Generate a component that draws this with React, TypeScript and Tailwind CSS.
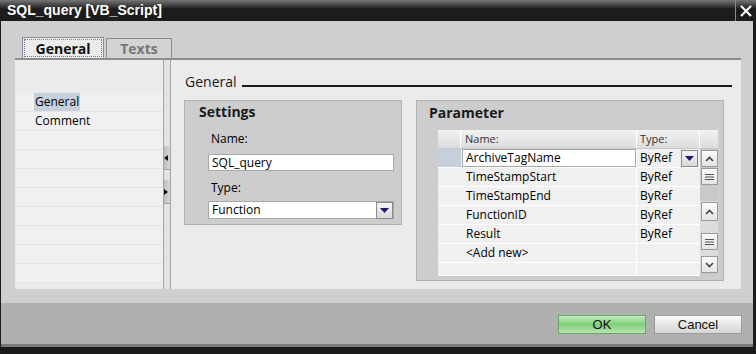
import React from "react";

const font = { fontFamily: '"Open Sans", "Noto Sans", sans-serif' };

const navRows = ["General", "Comment", "", "", "", "", "", "", "", ""];

const params = [
  { name: "ArchiveTagName", type: "ByRef" },
  { name: "TimeStampStart", type: "ByRef" },
  { name: "TimeStampEnd", type: "ByRef" },
  { name: "FunctionID", type: "ByRef" },
  { name: "Result", type: "ByRef" },
  { name: "<Add new>", type: "" },
  { name: "", type: "" },
];

function ScrollBtn({ kind }: { kind: "up" | "down" | "grip" }) {
  return (
    <div className="w-[17px] h-[17px] border border-[#9a9a9a] bg-gradient-to-b from-[#fafafa] to-[#e4e4e4] flex items-center justify-center">
      {kind === "up" && (
        <svg width="9" height="6" viewBox="0 0 9 6">
          <path d="M1 5 L4.5 1.5 L8 5" fill="none" stroke="#444" strokeWidth="1.6" />
        </svg>
      )}
      {kind === "down" && (
        <svg width="9" height="6" viewBox="0 0 9 6">
          <path d="M1 1 L4.5 4.5 L8 1" fill="none" stroke="#444" strokeWidth="1.6" />
        </svg>
      )}
      {kind === "grip" && (
        <svg width="9" height="8" viewBox="0 0 9 8">
          <path d="M0 1.5 H9 M0 4 H9 M0 6.5 H9" stroke="#555" strokeWidth="1" />
        </svg>
      )}
    </div>
  );
}

function DropBtn() {
  return (
    <div className="w-[17px] h-[17px] border border-[#8a8a8a] bg-gradient-to-b from-[#f4f4f4] to-[#d8d8d8] flex items-center justify-center">
      <svg width="9" height="5" viewBox="0 0 9 5">
        <path d="M0 0 H9 L4.5 5 Z" fill="#1a1a6e" />
      </svg>
    </div>
  );
}

export default function App() {
  return (
    <div
      className="w-[756px] h-[354px] bg-[#1c1c1c] flex flex-col overflow-hidden text-black"
      style={font}
    >
      {/* title bar */}
      <div className="h-[21px] flex items-center bg-[linear-gradient(to_bottom,#767676_0px,#3a3a3a_6px,#1c1c1c_9px,#1c1c1c)]">
        <span className="pl-[7px] text-white text-[14px] font-bold" style={{ fontFamily: '"Liberation Sans", Arial, sans-serif' }}>
          SQL_query [VB_Script]
        </span>
        <div className="ml-auto h-full border-l border-[#8a8a8a] w-[21px] flex items-center justify-center">
          <svg width="12" height="12" viewBox="0 0 12 12">
            <path d="M1 1 L11 11 M11 1 L1 11" stroke="#fff" strokeWidth="2.2" />
          </svg>
        </div>
      </div>

      {/* body */}
      <div className="ml-[1px] mr-[3px] flex flex-col">
        <div className="h-[282px] bg-[#cfcfcf] pl-[14px] pt-[16px] flex flex-col">
          {/* tabs */}
          <div className="flex items-end h-[21px] pl-[7px] gap-[2px]">
            <div className="w-[82px] h-[21px] bg-[#ebebeb] border border-b-0 border-[#8d8d8d] p-[1px]">
              <div className="h-full border border-dotted border-[#6a78b8] flex items-center justify-center text-[14px] font-bold text-[#111]">
                General
              </div>
            </div>
            <div className="w-[66px] h-[20px] bg-[#d3d3d3] border border-b-0 border-[#8d8d8d] flex items-center justify-center text-[14px] font-bold text-[#777]">
              Texts
            </div>
          </div>

          {/* panel */}
          <div className="w-[726px] h-[231px] bg-[#ebebeb] border-t-2 border-[#8d8d8d] flex">
            {/* left nav */}
            <div className="w-[148px] flex flex-col pl-[1px]">
              <div className="h-[33px]" />
              {navRows.map((r, i) => (
                <div
                  key={i}
                  className="h-[19px] bg-[#f0f0f0] border-b border-[#e4e4e4] pl-[18px] flex items-center text-[12px]"
                >
                  {r && (
                    <span className={i === 0 ? "bg-[#c5d0dc] px-[1px] h-[18px] flex items-center" : "px-[1px]"}>{r}</span>
                  )}
                </div>
              ))}
            </div>

            {/* splitter */}
            <div className="w-[8px] border-x border-[#a4a4a4] bg-[#e2e2e2] flex flex-col">
              <div className="h-[86px]" />
              <div className="h-[24px] bg-gradient-to-r from-[#bdbdbd] to-[#d8d8d8] border-b border-[#a4a4a4] flex items-center">
                <svg width="4" height="6" viewBox="0 0 4 6">
                  <path d="M4 0 L0 3 L4 6 Z" fill="#111" />
                </svg>
              </div>
              <div className="h-[10px]" />
              <div className="h-[24px] bg-gradient-to-r from-[#bdbdbd] to-[#d8d8d8] border-b border-[#a4a4a4] flex items-center">
                <svg width="4" height="6" viewBox="0 0 4 6">
                  <path d="M0 0 L4 3 L0 6 Z" fill="#111" />
                </svg>
              </div>
            </div>

            {/* right content */}
            <div className="flex-1 pl-[13px] pt-[12px]">
              <div className="flex items-center h-[18px]">
                <span className="pl-[1px] text-[14px] text-[#1a1a1a]">General</span>
                <div className="ml-[5px] mt-[10px] w-[490px] h-[2px] bg-[#1a1a1a]" />
              </div>

              <div className="mt-[10px] flex gap-[14px] items-start">
                {/* Settings */}
                <div className="w-[218px] h-[125px] bg-[#cdcdcd] border border-[#b0b0b0] flex flex-col pl-[23px]">
                  <div className="-ml-[9px] mt-[2px] h-[18px] leading-[18px] text-[14px] font-bold text-[#1a1a1a]">Settings</div>
                  <div className="mt-[10px] h-[16px] leading-[16px] text-[12px] pl-[3px]">Name:</div>
                  <div className="mt-[7px] w-[186px] h-[17px] bg-white border border-[#a8a8a8] text-[12px] flex items-center pl-[3px]">
                    SQL_query
                  </div>
                  <div className="mt-[9px] h-[16px] leading-[16px] text-[12px] pl-[3px]">Type:</div>
                  <div className="mt-[5px] w-[186px] h-[18px] bg-white border border-[#a8a8a8] text-[12px] flex items-center">
                    <span className="pl-[3px] flex-1">Function</span>
                    <DropBtn />
                  </div>
                </div>

                {/* Parameter */}
                <div className="w-[308px] h-[181px] bg-[#cdcdcd] border border-[#b0b0b0] flex flex-col">
                  <div className="pl-[12px] mt-[3px] h-[18px] leading-[18px] text-[14px] font-bold text-[#1a1a1a]">Parameter</div>
                  <div className="ml-[21px] mt-[8px] w-[280px] flex flex-col">
                    {/* header */}
                    <div className="h-[19px] flex text-[11px] text-[#333] bg-gradient-to-b from-[#f2f2f2] to-[#dcdcdc] border-b border-[#c8c8c8]">
                      <div className="w-[23px] border-r border-[#fff]" />
                      <div className="w-[176px] pl-[4px] flex items-center border-r border-[#fff]">Name:</div>
                      <div className="w-[63px] pl-[3px] flex items-center border-r border-[#fff]">Type:</div>
                      <div className="w-[18px]" />
                    </div>
                    <div className="flex">
                      <div className="flex flex-col">
                        {params.map((p, i) => (
                          <div key={i} className={`flex text-[12px] ${i === 6 ? "h-[13px]" : "h-[19px]"}`}>
                            <div className={`w-[23px] border-b border-white ${i === 0 ? "bg-[#c5d0dc]" : "bg-[#f0f0f0]"}`} />
                            <div className="w-[176px] bg-[#f0f0f0] border-b border-r border-white flex items-center">
                              {i === 0 ? (
                                <div className="ml-[1px] w-[174px] h-[18px] bg-white border border-[#a8a8a8] pl-[3px] flex items-center">
                                  {p.name}
                                </div>
                              ) : (
                                <span className="pl-[5px]">{p.name}</span>
                              )}
                            </div>
                            <div className="w-[63px] bg-[#f0f0f0] border-b border-white flex items-center pl-[3px] pr-[2px]">
                              <span className="flex-1">{p.type}</span>
                              {i === 0 && <DropBtn />}
                            </div>
                          </div>
                        ))}
                      </div>
                      {/* scrollbar */}
                      <div className="w-[18px] bg-[#c9c9c9] flex flex-col items-center pt-[1px]">
                        <ScrollBtn kind="up" />
                        <div className="mt-[1px]"><ScrollBtn kind="grip" /></div>
                        <div className="h-[16px]" />
                        <div className="w-full bg-[#dcdcdc] flex flex-col items-center pt-[1px]">
                          <div className="h-[19px] w-[17px] border border-[#9a9a9a] bg-gradient-to-b from-[#fafafa] to-[#e4e4e4] flex items-center justify-center">
                            <svg width="9" height="6" viewBox="0 0 9 6">
                              <path d="M1 5 L4.5 1.5 L8 5" fill="none" stroke="#444" strokeWidth="1.6" />
                            </svg>
                          </div>
                          <div className="h-[12px]" />
                          <ScrollBtn kind="grip" />
                          <div className="h-[6px]" />
                          <ScrollBtn kind="down" />
                        </div>
                      </div>
                    </div>
                  </div>
                </div>
              </div>
            </div>
          </div>
        </div>

        {/* footer */}
        <div className="h-[41px] bg-[#b0b0b0] flex items-center justify-end gap-[8px] pr-[11px] pt-[2px]">
          <div className="w-[88px] h-[19px] border border-[#6aa56a] bg-gradient-to-b from-[#c4ecc0] via-[#80cf7a] to-[#b8e6b2] flex items-center justify-center text-[13px] text-[#111]" style={{ fontFamily: '"Liberation Sans Narrow", "Liberation Sans", sans-serif' }}>
            OK
          </div>
          <div className="w-[88px] h-[19px] border border-[#9a9a9a] bg-gradient-to-b from-[#fbfbfb] via-[#e6e6e6] to-[#d6d6d6] flex items-center justify-center text-[13px] text-[#111]" style={{ fontFamily: '"Liberation Sans Narrow", "Liberation Sans", sans-serif' }}>
            Cancel
          </div>
        </div>
        <div className="h-[3px] bg-[#7a7a7a]" />
      </div>
    </div>
  );
}
